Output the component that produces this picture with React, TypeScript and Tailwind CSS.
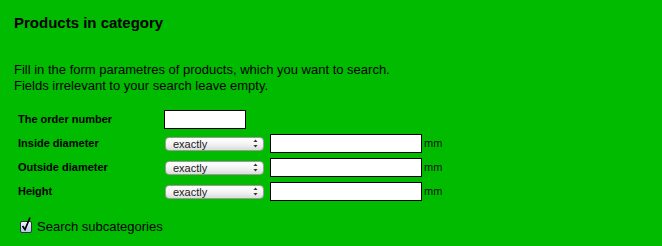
function Arrows() {
  return (
    <svg width="5" height="9" viewBox="0 0 5 9" className="shrink-0">
      <path d="M2.5 0.5 L4.5 3 L0.5 3 Z" fill="#333" />
      <path d="M2.5 8.5 L4.5 6 L0.5 6 Z" fill="#333" />
    </svg>
  );
}

function Select() {
  return (
    <div className="flex h-[14px] w-[99px] items-center justify-between rounded-[4px] border border-[#9a9a9a] bg-gradient-to-b from-white via-[#f4f4f4] to-[#dcdcdc] pl-[7px] pr-[5px] text-[11px] leading-none text-[#222]">
      <span className="pt-px">exactly</span>
      <Arrows />
    </div>
  );
}

function Field({ w }: { w: string }) {
  return <div className={`h-[19px] ${w} border border-black bg-white`} />;
}

function CheckBox() {
  return (
    <div className="relative h-[12px] w-[12px] shrink-0 rounded-[2px] border border-[#2c3440] bg-gradient-to-b from-[#f2f6fd] to-[#b4c8e8]">
      <svg width="12" height="16" viewBox="0 0 12 16" className="absolute left-[-1px] top-[-6px]">
        <path d="M2.5 10 L5 13.5 L10 1.5" fill="none" stroke="#000" strokeWidth="1.7" />
      </svg>
    </div>
  );
}

const rows = ["Inside diameter", "Outside diameter", "Height"];

export default function App() {
  return (
    <div className="h-[246px] w-[662px] bg-[#00bb00] text-black font-['Liberation_Sans',Arial,sans-serif]">
      <div className="px-[14px] pt-[14px]">
        <h1 className="text-[15px] font-bold leading-[18px]">Products in category</h1>
        <p className="mt-[30px] text-[13px] leading-[16px]">
          Fill in the form parametres of products, which you want to search.
          <br />
          Fields irrelevant to your search leave empty.
        </p>
        <div className="mt-[16px] flex flex-col gap-[5px] pl-[4px]">
          <div className="flex h-[19px] items-center">
            <span className="w-[146px] text-[11px] font-bold">The order number</span>
            <Field w="w-[82px]" />
          </div>
          {rows.map((r) => (
            <div key={r} className="flex h-[19px] items-center">
              <span className="w-[147px] text-[11px] font-bold">{r}</span>
              <Select />
              <div className="ml-[6px]">
                <Field w="w-[152px]" />
              </div>
              <span className="ml-[2px] text-[11px] text-[#111]">mm</span>
            </div>
          ))}
        </div>
        <label className="mt-[18px] flex items-center gap-[5px] pl-[6px] text-[13px] leading-[16px]">
          <CheckBox />
          Search subcategories
        </label>
      </div>
    </div>
  );
}
